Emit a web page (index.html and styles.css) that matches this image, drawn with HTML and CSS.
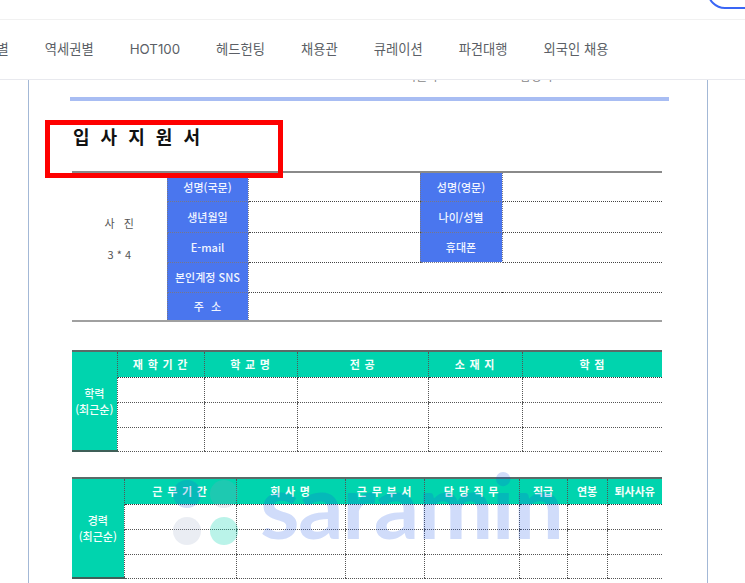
FILE: index.html
```html
<!DOCTYPE html>
<html lang="ko">
<head>
<meta charset="utf-8">
<title>입사지원서</title>
<link rel="stylesheet" href="styles.css">
</head>
<body>
<header class="topbar"><span class="login-btn"></span></header>
<nav class="gnb">
  <a class="gnb-cut">지역별</a>
  <a>역세권별</a>
  <a>HOT100</a>
  <a>헤드헌팅</a>
  <a>채용관</a>
  <a>큐레이션</a>
  <a>파견대행</a>
  <a>외국인 채용</a>
</nav>
<main class="doc">
  <div class="peek"><span>지원자 :</span><span>담당자 :</span></div>
  <div class="rule"></div>
  <div class="sheet">
    <h1 class="title">입 사 지 원 서</h1>
    <span class="redbox"></span>
    <table class="form info">
      <colgroup><col class="c-photo"><col class="c-label"><col class="c-val"><col class="c-label2"><col></colgroup>
      <tr><td class="photo" rowspan="5"><p>사 &nbsp; 진</p><p>3 * 4</p></td><th>성명(국문)</th><td></td><th>성명(영문)</th><td></td></tr>
      <tr><th>생년월일</th><td></td><th>나이/성별</th><td></td></tr>
      <tr><th>E-mail</th><td></td><th>휴대폰</th><td></td></tr>
      <tr><th>본인계정 SNS</th><td colspan="3"></td></tr>
      <tr><th class="wide">주 소</th><td colspan="3"></td></tr>
    </table>
    <table class="form grid edu">
      <colgroup><col class="e0"><col class="e1"><col class="e2"><col class="e3"><col class="e4"><col></colgroup>
      <tr class="head"><th class="side" rowspan="4">학력<br>(최근순)</th><th>재 학 기 간</th><th>학 교 명</th><th>전 공</th><th>소 재 지</th><th>학 점</th></tr>
      <tr><td></td><td></td><td></td><td></td><td></td></tr>
      <tr><td></td><td></td><td></td><td></td><td></td></tr>
      <tr><td></td><td></td><td></td><td></td><td></td></tr>
    </table>
    <table class="form grid career">
      <colgroup><col class="k0"><col class="k1"><col class="k2"><col class="k3"><col class="k4"><col class="k5"><col class="k6"><col></colgroup>
      <tr class="head"><th class="side" rowspan="4">경력<br>(최근순)</th><th>근 무 기 간</th><th>회 사 명</th><th>근 무 부 서</th><th>담 당 직 무</th><th class="tight">직급</th><th class="tight">연봉</th><th class="tight">퇴사사유</th></tr>
      <tr><td></td><td></td><td></td><td></td><td></td><td></td><td></td></tr>
      <tr><td></td><td></td><td></td><td></td><td></td><td></td><td></td></tr>
      <tr><td></td><td></td><td></td><td></td><td></td><td></td><td></td></tr>
    </table>
  </div>
</main>
<div class="watermark" aria-hidden="true">
  <span class="dot d1"></span><span class="dot d2"></span><span class="dot d3"></span><span class="dot d4"></span>
  <span class="wm-text">saramin</span>
</div>
</body>
</html>
```
FILE: styles.css
```css
* { box-sizing: border-box; }
html, body { margin: 0; padding: 0; }
body {
  width: 745px;
  height: 583px;
  overflow: hidden;
  position: relative;
  background: #fff;
  font-family: "Noto Sans CJK KR", "Noto Sans", sans-serif;
}
.topbar {
  height: 20px;
  display: flex;
  justify-content: flex-end;
  align-items: flex-end;
  border-bottom: 1px solid #f1f1f1;
  overflow: hidden;
}
.login-btn {
  display: block;
  width: 70px;
  height: 40px;
  margin: 0 -32px 10px 0;
  flex: none;
  border: 2px solid #3a66f5;
  border-radius: 18px;
}
.gnb {
  height: 60px;
  display: flex;
  align-items: center;
  gap: 36px;
  padding-bottom: 2px;
  border-bottom: 1px solid #e8e9ee;
  background: #fff;
  color: #5b5f66;
  font-family: "Inter", "Noto Sans CJK KR", sans-serif;
  font-size: 13.3px;
  white-space: nowrap;
  position: relative;
  z-index: 1;
  overflow: hidden;
}
.gnb a { flex: none; }
.gnb-cut { margin-left: -28px; }
.doc {
  width: 680px;
  height: 503px;
  margin-left: 28px;
  border-left: 1px solid #a3b8d6;
  border-right: 1px solid #a3b8d6;
  overflow: hidden;
}
.peek {
  height: 2px;
  overflow: hidden;
  display: flex;
  padding-left: 376px;
  gap: 75px;
  font-size: 12px;
  line-height: 12px;
  color: #888;
  white-space: nowrap;
}
.peek span { margin-top: -10px; display: block; height: 12px; }
.rule {
  width: 599px;
  height: 4px;
  margin: 15px 0 0 41px;
  background: #a8bdf3;
}
.sheet {
  position: relative;
  padding-left: 43px;
  width: 634px;
}
.title {
  margin: 0;
  padding: 22px 0 0 1px;
  height: 70px;
  font-size: 18px;
  line-height: 26px;
  letter-spacing: 3px;
  font-weight: 700;
  color: #111;
}
.redbox {
  position: absolute;
  left: 16px;
  top: 19px;
  width: 238px;
  height: 58px;
  border: 5px solid #fe0000;
  z-index: 2;
}
.form {
  border-collapse: collapse;
  table-layout: fixed;
  width: 590px;
  font-size: 11px;
}
.form th, .form td { padding: 0; }
.info { border-top: 2px solid #8a8a8a; border-bottom: 2px solid #a0a0a0; color: #444; }
.info tr { height: 30px; }
.info tr:nth-child(1) { height: 29px; }
.info tr:nth-child(2) { height: 31px; }
.info tr:nth-child(5) { height: 29px; }
.info td { border-bottom: 1px dotted #444; }
.info th {
  background: #4a76ee;
  color: #f1f5ff;
  font-weight: 500;
  border: 1px dotted #778;
  white-space: nowrap;
}
.info th.wide { word-spacing: 4px; }
.c-photo { width: 95px; }
.c-label { width: 81px; }
.c-val { width: 172px; }
.c-label2 { width: 82px; }
.info .photo {
  border-bottom: 0;
  padding-bottom: 16px;
  text-align: center;
  font-size: 11px;
  color: #555;
}
.photo p { margin: 0 0 15px; }
.photo p:last-child { margin: 0; }
.grid { border-top: 2px solid #5a6b68; }
.grid th { background: #00d4ae; color: #f4fffb; font-weight: 700; }
.grid .head { height: 26px; }
.grid .head th {
  border-bottom: 1px dotted #333;
  border-right: 1px dotted #555;
  font-size: 11px;
  letter-spacing: 0.8px;
}
.grid .head th:last-child { border-right: 0; }
.grid tr { height: 25px; }
.grid tr:last-child { height: 24px; }
.grid td { border-bottom: 1px dotted #555; border-left: 1px dotted #555; }
.grid .head th.tight { letter-spacing: 0; }
.grid .head th.side {
  border-right: 1px dotted #555;
  border-bottom: 2px solid #3f5f58;
  font-size: 11px;
  font-weight: 500;
  line-height: 16px;
  letter-spacing: 0;
}
.edu { margin-top: 28px; }
.e0 { width: 45px; }
.e1 { width: 87px; }
.e2 { width: 93px; }
.e3 { width: 131px; }
.e4 { width: 94px; }
.career { margin-top: 25px; }
.k0 { width: 52px; }
.k1 { width: 112px; }
.k2 { width: 109px; }
.k3 { width: 79px; }
.k4 { width: 95px; }
.k5 { width: 48px; }
.k6 { width: 40px; }
.watermark {
  position: absolute;
  inset: 0;
  pointer-events: none;
  z-index: 3;
}
.dot {
  position: absolute;
  width: 28px;
  height: 28px;
  border-radius: 50%;
}
.d1 { left: 173px; top: 480px; background: rgba(28, 84, 225, 0.2); }
.d2 { left: 210px; top: 480px; background: rgba(150, 160, 190, 0.2); }
.d3 { left: 173px; top: 517px; background: rgba(150, 165, 195, 0.2); }
.d4 { left: 210px; top: 517px; background: rgba(0, 212, 174, 0.27); }
.wm-text {
  position: absolute;
  left: 260px;
  top: 449px;
  font-family: "Lato", sans-serif;
  font-size: 90px;
  line-height: 110px;
  font-weight: 700;
  letter-spacing: -1.5px;
  color: rgba(20, 80, 230, 0.2);
}
```
